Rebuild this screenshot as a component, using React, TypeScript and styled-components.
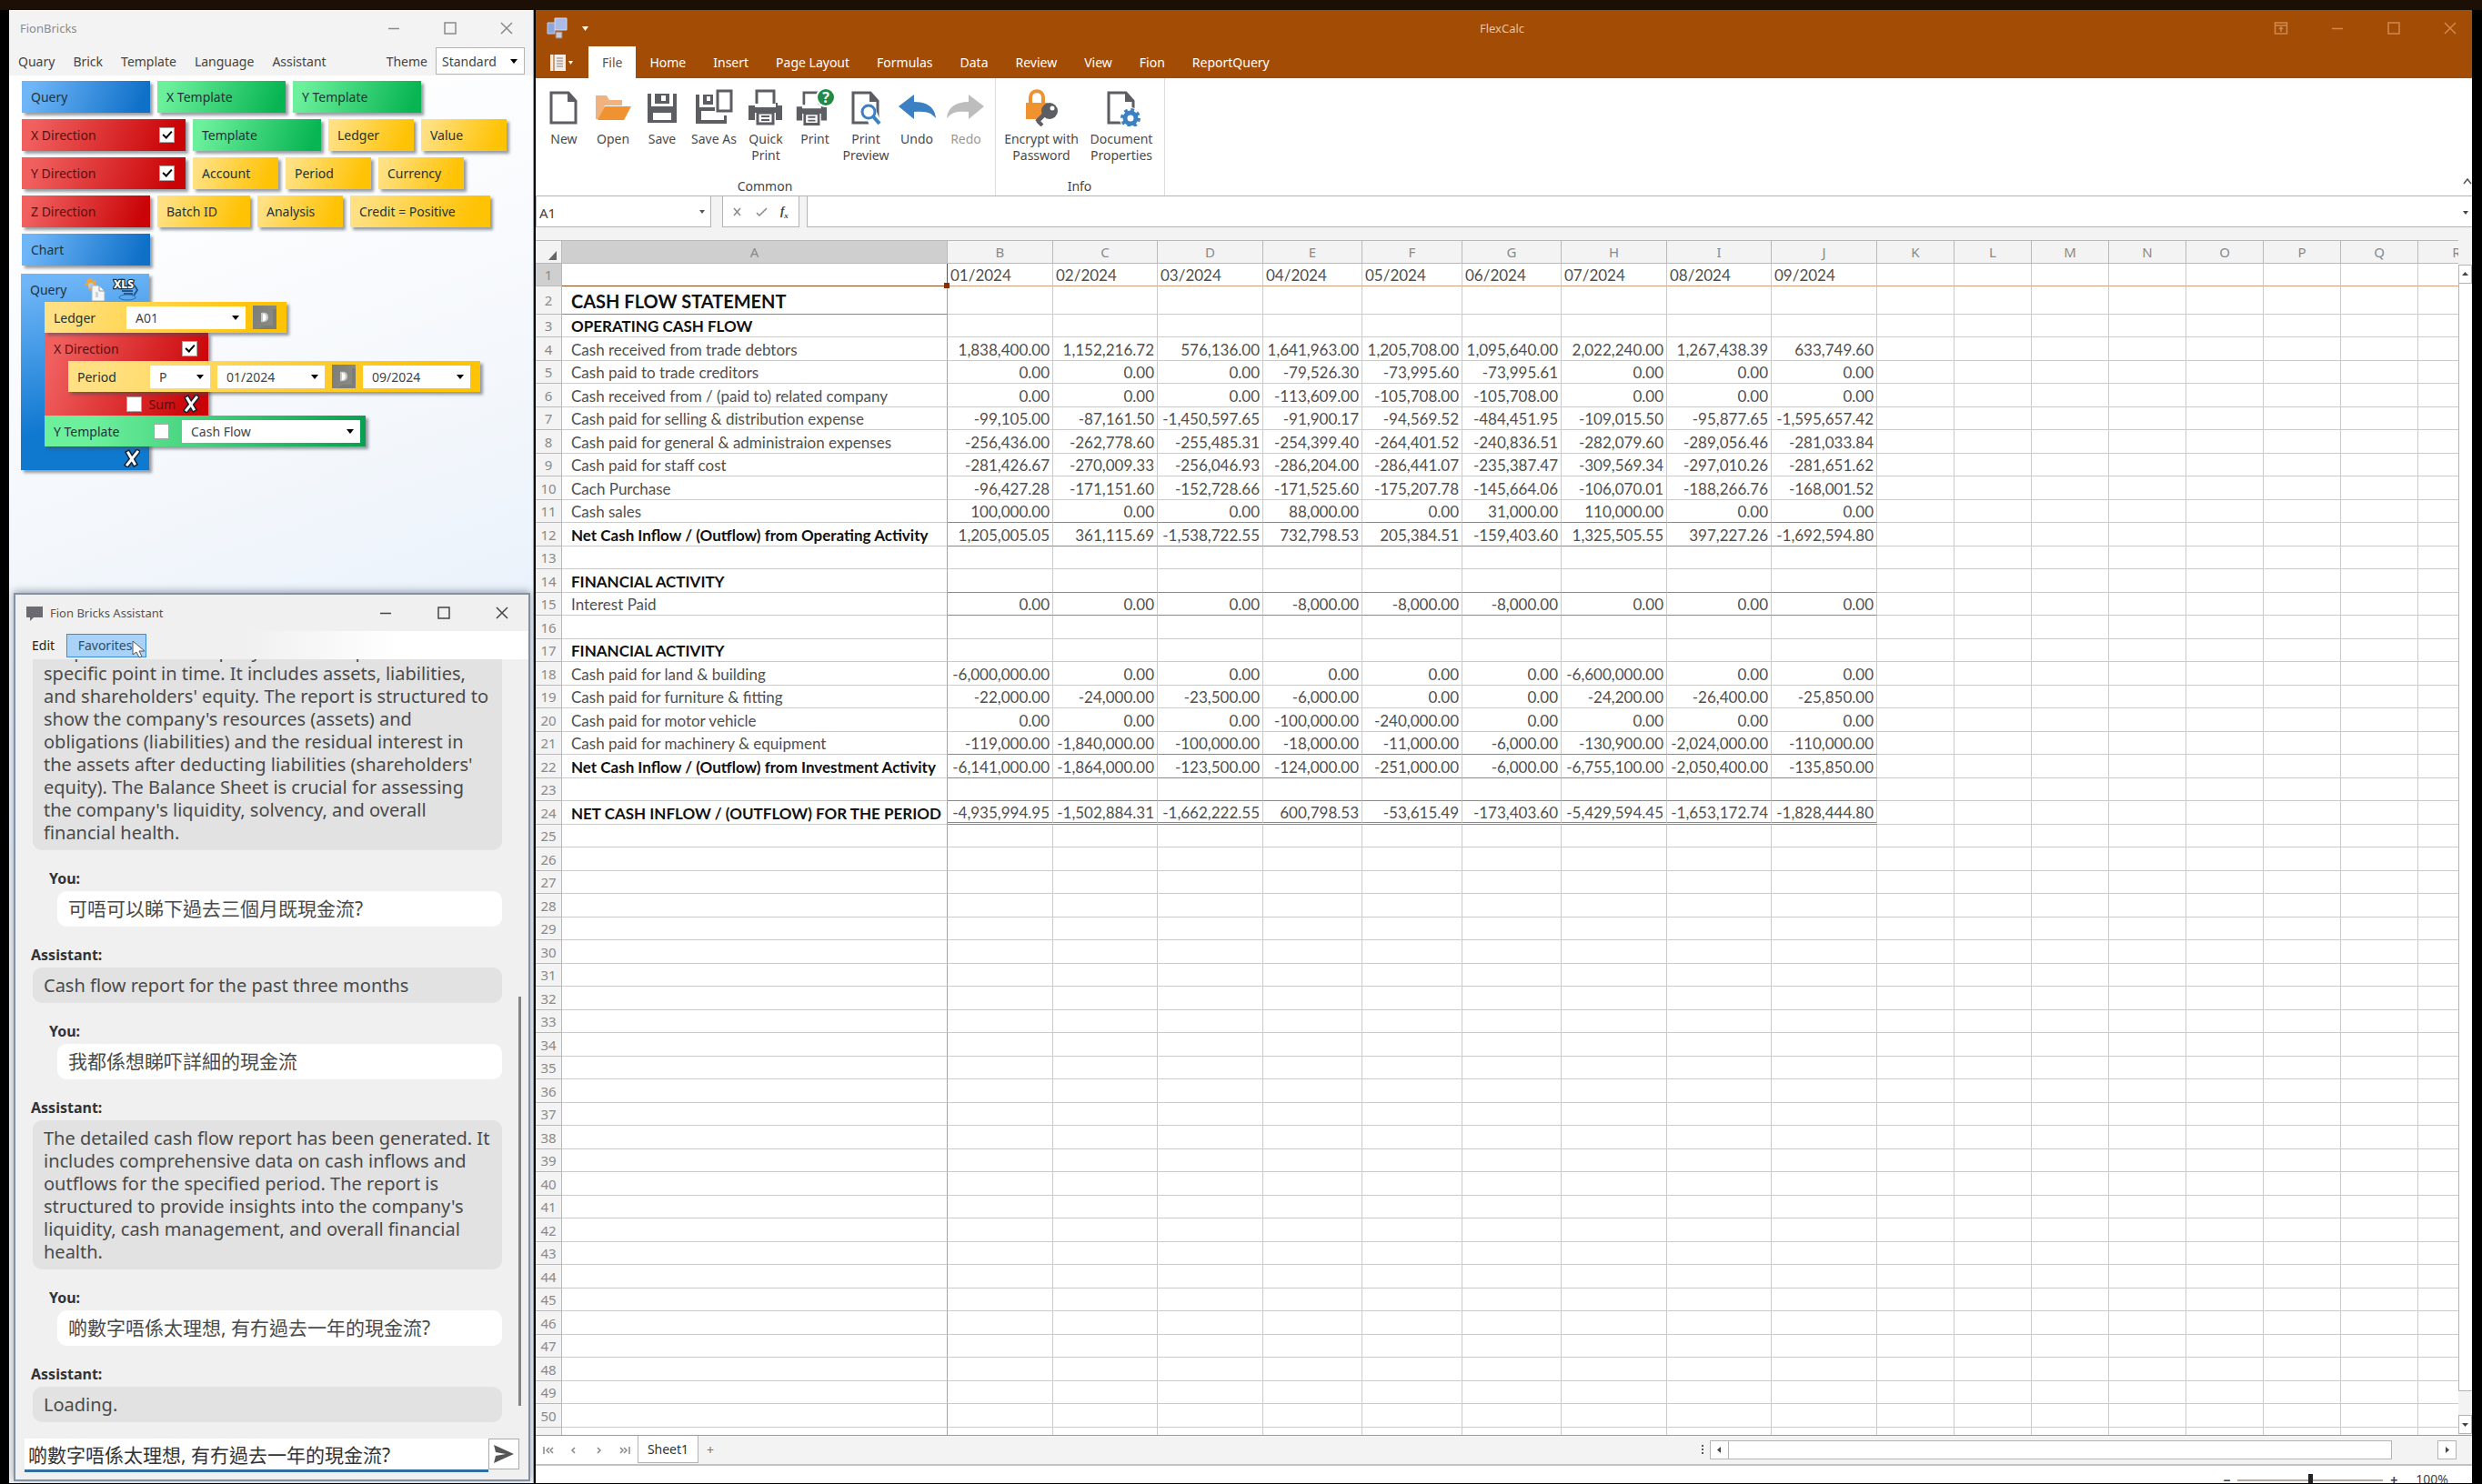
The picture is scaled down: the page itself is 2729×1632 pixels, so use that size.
import React from "react";
import styled, { createGlobalStyle, css } from "styled-components";

const UI = `"Noto Sans", "Noto Sans CJK TC", sans-serif`;
const SHEET = `Lato, "Noto Sans", sans-serif`;

const GlobalStyle = createGlobalStyle`
  *, *::before, *::after { box-sizing: border-box; }
  body { margin: 0; background: #000; font-family: ${UI}; font-size: 14px; color: #444; }
  button, input, select { font: inherit; color: inherit; margin: 0; padding: 0; border: 0; background: none; border-radius: 0; }
`;

/* ---------- Desktop ---------- */

const Desktop = styled.div`
  display: flex;
  height: 100vh;
  padding: 0 11px 1px 10px;
  border-top: 11px solid #1c1006;
  background: #000;
  overflow: hidden;
`;

/* ---------- Shared window parts ---------- */

const TitleBar = styled.header<{ $h: number }>`
  flex: none;
  display: flex;
  align-items: center;
  gap: 8px;
  height: ${(p) => p.$h}px;
  padding: 0 21px 0 12px;
`;

const TitleText = styled.h1<{ $color?: string }>`
  margin: 0;
  flex: 1;
  font-size: 13px;
  font-weight: 400;
  color: ${(p) => p.$color || "#555"};
`;

const WinButtons = styled.div<{ $color: string; $gap: number }>`
  display: flex;
  gap: ${(p) => p.$gap}px;
  color: ${(p) => p.$color};
`;

const WinButton = styled.button`
  width: 16px;
  height: 16px;
  svg { display: block; }
`;

const WinIcon = ({ kind }: { kind: "min" | "max" | "close" | "pin" }) => (
  <svg width="16" height="16" viewBox="0 0 16 16" fill="none" stroke="currentColor" strokeWidth="1.5">
    {kind === "min" && <path d="M2 8.5h12" />}
    {kind === "max" && <rect x="2" y="2" width="12" height="12" />}
    {kind === "close" && <path d="M2 2l12 12M14 2L2 14" />}
    {kind === "pin" && <path d="M1.500 2h13v12h-13zM1.500 5h13M8 12V7M6 9l2-2 2 2" />}
  </svg>
);

/* ---------- Bricks window ---------- */

const BricksWindow = styled.section`
  flex: 0 0 577px;
  display: flex;
  flex-direction: column;
  padding: 0 3px 2px 5px;
  background: linear-gradient(160deg, #fff 10%, #f5f8fc 30%, #e9f1fb 50%, #f2f2f2 60%);
  border-right: 1px solid #9aa2ab;
`;

const BricksChrome = styled.div`
  margin: 0 -3px 0 -5px;
  background: #f3f3f3;
`;

const MenuBar = styled.nav`
  display: flex;
  align-items: center;
  height: 32px;
  padding: 0 9px 0 10px;
`;

const MenuItem = styled.button`
  margin-right: 20px;
`;

const ThemeLabel = styled.label`
  display: flex;
  align-items: center;
  gap: 9px;
  margin-left: auto;
`;

const SelectWrap = styled.span<{ $w: number; $h: number; $border?: boolean }>`
  position: relative;
  display: block;
  flex: none;
  width: ${(p) => p.$w}px;
  height: ${(p) => p.$h}px;
  background: #fff;
  border: ${(p) => (p.$border ? "1px solid #b5b5b5" : "0")};
  &::after {
    content: "";
    position: absolute;
    right: 7px;
    top: 50%;
    margin-top: -2px;
    border: 4px solid transparent;
    border-top: 5px solid #000;
    border-bottom: 0;
    pointer-events: none;
  }
`;

const SelectBox = styled.select<{ $pad: number }>`
  appearance: none;
  width: 100%;
  height: 100%;
  padding: 0 18px 0 ${(p) => p.$pad}px;
  color: #444;
`;

const Dropdown = ({ w, h = 25, pad = 10, border, value, label, id }:
  { w: number; h?: number; pad?: number; border?: boolean; value: string; label: string; id?: string }) => (
  <SelectWrap $w={w} $h={h} $border={border}>
    <SelectBox id={id} $pad={pad} aria-label={label} defaultValue={value}>
      <option>{value}</option>
    </SelectBox>
  </SelectWrap>
);

const Tick = styled.input.attrs({ type: "checkbox" })`
  appearance: none;
  flex: none;
  display: grid;
  place-items: center;
  width: 17px;
  height: 17px;
  background: #fff;
  border: 1px solid rgba(0, 0, 0, 0.35);
  &:checked::before {
    content: "";
    width: 6px;
    height: 10px;
    margin-bottom: 3px;
    border: solid #000;
    border-width: 0 2px 2px 0;
    transform: rotate(42deg);
  }
`;

type Tone = "blue" | "green" | "red" | "yellow";
const tones: Record<Tone, string> = {
  blue: "linear-gradient(110deg, #6fb6f8 8%, #0f70c8 92%)",
  green: "linear-gradient(110deg, #6cf09b 8%, #08b553 92%)",
  red: "linear-gradient(110deg, #f0605f 8%, #c90306 92%)",
  yellow: "linear-gradient(110deg, #ffe184 8%, #ffc306 85%)",
};

const brickLook = css<{ $tone: Tone; $w: number }>`
  width: ${(p) => p.$w}px;
  background: ${(p) => tones[p.$tone]};
  box-shadow: 3px 3px 3px rgba(70, 80, 90, 0.55);
  color: ${(p) => (p.$tone === "red" ? "#5a1010" : "#23333a")};
`;

const Palette = styled.div`
  display: flex;
  flex-direction: column;
  gap: 7px;
  padding: 6px 0 0 9px;
`;

const PaletteRow = styled.div`
  display: flex;
  gap: 8px;
`;

const Brick = styled.div<{ $tone: Tone; $w: number }>`
  ${brickLook}
  display: flex;
  align-items: center;
  justify-content: space-between;
  height: 35px;
  padding: 0 12px 0 10px;
`;

const palette: { t: string; tone: Tone; w: number; tick?: boolean }[][] = [
  [{ t: "Query", tone: "blue", w: 141 }, { t: "X Template", tone: "green", w: 141 }, { t: "Y Template", tone: "green", w: 141 }],
  [{ t: "X Direction", tone: "red", w: 180, tick: true }, { t: "Template", tone: "green", w: 141 }, { t: "Ledger", tone: "yellow", w: 94 }, { t: "Value", tone: "yellow", w: 94 }],
  [{ t: "Y Direction", tone: "red", w: 180, tick: true }, { t: "Account", tone: "yellow", w: 94 }, { t: "Period", tone: "yellow", w: 94 }, { t: "Currency", tone: "yellow", w: 94 }],
  [{ t: "Z Direction", tone: "red", w: 141 }, { t: "Batch ID", tone: "yellow", w: 102 }, { t: "Analysis", tone: "yellow", w: 94 }, { t: "Credit = Positive", tone: "yellow", w: 154 }],
  [{ t: "Chart", tone: "blue", w: 141 }],
];

const Assembly = styled.div<{ $tone: Tone; $w: number }>`
  ${brickLook}
  ${(p) => p.$tone === "blue" && css`background: linear-gradient(170deg, #6fb6f8 5%, #0f78cf 75%);`}
`;

const QueryAssembly = styled(Assembly)`
  margin: 9px 0 0 8px;
  padding-left: 26px;
`;

const AssemblyHead = styled.div<{ $indent?: number }>`
  display: flex;
  align-items: center;
  height: 31px;
  padding: 4px 12px 0 10px;
  margin-left: -${(p) => p.$indent || 0}px;
  justify-content: space-between;
`;

const HeadIcons = styled.div`
  display: flex;
  gap: 8px;
`;

const AssemblyFoot = styled.div`
  display: flex;
  align-items: center;
  justify-content: flex-end;
  gap: 8px;
  height: 26px;
  padding-right: 10px;
`;

const Slot = styled.div<{ $tone: Tone; $w: number; $indent?: number; $gap?: number }>`
  ${brickLook}
  position: relative;
  display: flex;
  align-items: center;
  gap: ${(p) => p.$gap || 8}px;
  height: 34px;
  padding-left: 10px;
  margin-left: ${(p) => p.$indent || 0}px;
  ${(p) => p.$tone === "green" && css`background: linear-gradient(90deg, #6cf09b 15%, #08a050);`}
`;

const SlotLabel = styled.span<{ $w: number }>`
  flex: none;
  width: ${(p) => p.$w}px;
`;

const ToggleButton = styled.button`
  flex: none;
  width: 26px;
  height: 26px;
  background: linear-gradient(115deg, #7d7d78, #8d8d88);
  svg { display: block; margin: auto; }
`;

const Toggle = ({ label }: { label: string }) => (
  <ToggleButton aria-label={label}>
    <svg width="26" height="26" viewBox="0 0 26 26">
      <path d="M22 4h4v22H6l6-4h10z" fill="#6e6e6c" opacity=".5" />
      <path d="M9 8c7-1 8 2 8 5s-2 6-8 5z" fill="#c9c9c9" />
      <path d="M11 9c5 0 5 8 0 8z" fill="#fff" />
    </svg>
  </ToggleButton>
);

const RemoveButton = styled.button`
  flex: none;
  width: 18px;
  height: 20px;
  svg { display: block; }
`;

const Remove = ({ label }: { label: string }) => (
  <RemoveButton aria-label={label}>
    <svg width="18" height="20" viewBox="0 0 18 20" strokeLinecap="square" fill="none">
      <path d="M5 4l7 12M15 3L4 17" stroke="#10202c" strokeWidth="6" />
      <path d="M5 4l7 12M15 3L4 17" stroke="#fff" strokeWidth="3" />
    </svg>
  </RemoveButton>
);

const Spacer = styled.div`
  flex: none;
  height: 135px;
`;

/* ---------- Assistant window ---------- */

const AssistantWindow = styled.section`
  flex: 1;
  min-height: 0;
  display: flex;
  flex-direction: column;
  border: 2px solid #8391a6;
  background: #f0f0f0;
  box-shadow: 0 -2px 8px rgba(60, 70, 90, 0.45);
`;

const AssistantMenu = styled.nav`
  position: relative;
  display: flex;
  align-items: center;
  gap: 13px;
  height: 31px;
  padding-left: 18px;
  color: #222;
  background: linear-gradient(90deg, #f0f0f0 45%, #fff 75%);
`;

const FavButton = styled.button`
  width: 88px;
  height: 26px;
  padding-right: 3px;
  color: #2d4d6c;
  background: #a8d3f7;
  border: 1px solid #3c8bd0;
`;

const Pointer = styled.svg`
  position: absolute;
  left: 128px;
  top: 10px;
`;

const Conversation = styled.div`
  position: relative;
  flex: 1;
  min-height: 0;
  display: flex;
  flex-direction: column;
  justify-content: flex-end;
  overflow: hidden;
  padding: 0 29px 18px 17px;
`;

const Speaker = styled.h2<{ $you?: boolean }>`
  flex: none;
  margin: 0;
  padding: ${(p) => (p.$you ? "20px 0 3px 20px" : "20px 0 3px 0")};
  font-size: 16px;
  line-height: 22px;
  font-weight: 700;
  color: #333;
`;

const Bubble = styled.p<{ $you?: boolean }>`
  flex: none;
  margin: 0 0 0 ${(p) => (p.$you ? 29 : 2)}px;
  padding: 7px 8px 7px 12px;
  border-radius: 10px;
  background: ${(p) => (p.$you ? "#fff" : "#e2e2e2")};
  font-size: ${(p) => (p.$you ? 21 : 20)}px;
  line-height: 25px;
  color: #4a4a4a;
`;

const ScrollThumb = styled.div`
  position: absolute;
  right: 8px;
  bottom: 36px;
  width: 3px;
  height: 450px;
  background: #858585;
`;

const Composer = styled.form`
  flex: none;
  display: flex;
  height: 37px;
  margin: 0 10px 8px;
`;

const ComposerInput = styled.input`
  flex: 1;
  min-width: 0;
  padding-left: 4px;
  background: #fff;
  border-bottom: 3px solid #2f6f9f;
  font-size: 21px;
  color: #333;
`;

const SendButton = styled.button`
  width: 34px;
  height: 34px;
  background: #fff;
  border: 1px solid #aaa;
  svg { display: block; margin: auto; }
`;

const messages: { you?: boolean; continued?: boolean; text: string }[] = [
  { continued: true, text: "snapshot of the company's financial position at a specific point in time. It includes assets, liabilities, and shareholders' equity. The report is structured to show the company's resources (assets) and obligations (liabilities) and the residual interest in the assets after deducting liabilities (shareholders' equity). The Balance Sheet is crucial for assessing the company's liquidity, solvency, and overall financial health." },
  { you: true, text: "可唔可以睇下過去三個月既現金流?" },
  { text: "Cash flow report for the past three months" },
  { you: true, text: "我都係想睇吓詳細的現金流" },
  { text: "The detailed cash flow report has been generated. It includes comprehensive data on cash inflows and outflows for the specified period. The report is structured to provide insights into the company's liquidity, cash management, and overall financial health." },
  { you: true, text: "啲數字唔係太理想, 有冇過去一年的現金流?" },
  { text: "Loading." },
];

/* ---------- FlexCalc window ---------- */

const CalcWindow = styled.section`
  flex: 1;
  min-width: 0;
  display: flex;
  flex-direction: column;
  margin-left: 2px;
  background: #f3f3f3;
`;

const CalcHeader = styled.header`
  flex: none;
  background: #a34c06;
`;

const CalcTitleBar = styled.div`
  display: grid;
  grid-template-columns: 1fr auto 1fr;
  align-items: center;
  height: 40px;
  padding: 0 16px 0 12px;
`;

const QuickAccess = styled.div`
  display: flex;
  align-items: center;
  gap: 16px;
`;

const CalcTitle = styled.h1`
  margin: 0;
  font-size: 13px;
  font-weight: 400;
  color: #e7c4a4;
`;

const CalcButtons = styled(WinButtons)`
  justify-content: flex-end;
`;

const TabRow = styled.nav`
  display: flex;
  align-items: stretch;
  height: 35px;
`;

const PageMenu = styled.button`
  display: flex;
  align-items: center;
  gap: 3px;
  width: 58px;
  padding-left: 16px;
`;

const Tab = styled.button<{ $active?: boolean }>`
  padding: 0 15px;
  color: ${(p) => (p.$active ? "#555" : "#fff")};
  background: ${(p) => (p.$active ? "#fff" : "none")};
`;

const Ribbon = styled.div`
  flex: none;
  display: flex;
  height: 130px;
  background: #fff;
  border-bottom: 1px solid #b4b4b4;
`;

const RibbonGroup = styled.section`
  display: flex;
  flex-direction: column;
  padding: 11px 5px 0 4px;
  border-right: 1px solid #ddd;
`;

const RibbonItems = styled.div`
  flex: 1;
  display: flex;
`;

const RibbonButton = styled.button<{ $w: number; $dim?: boolean }>`
  display: flex;
  flex-direction: column;
  align-items: center;
  gap: 5px;
  width: ${(p) => p.$w}px;
  line-height: 18px;
  color: ${(p) => (p.$dim ? "#999" : "#4a4a4a")};
`;

const GroupName = styled.h2`
  margin: 0;
  font-size: 14px;
  line-height: 20px;
  font-weight: 400;
  text-align: center;
`;

const CollapseButton = styled.button`
  margin: auto 0 8px auto;
`;

const G = "#5d5d64";
const B = "#3a80c3";

const Doc = () => (
  <>
    <path d="M7 5h19l8 9v24H7z" fill="#fff" stroke={G} strokeWidth="3" />
    <path d="M25 5v10h10z" fill={G} />
  </>
);

const Printer = () => (
  <>
    <path d="M11 17V3h19v14" fill="#fff" stroke={G} strokeWidth="3" />
    <path d="M2 19h7v-3h0v5h23v-5h2v3h5v16h-7v-8H9v8H2z" fill={G} />
    <path d="M12 27h17v12H12z" fill="#fff" stroke={G} strokeWidth="3" />
    <path d="M16 31h9M16 35h9" stroke={G} strokeWidth="2" />
  </>
);

const icons: Record<string, React.ReactNode> = {
  new: <Doc />,
  open: (
    <>
      <path d="M2 8h12l3 5h14v6H12L6 34H2z" fill="#f0b380" />
      <path d="M12 20h29l-8 15H4z" fill="#f0922f" />
    </>
  ),
  save: (
    <>
      <path d="M5 6h4v14h24V6h4v32H5z" fill={G} />
      <path d="M13 6h16v11H13z" fill={G} />
      <path d="M20 8h5v6h-5z" fill="#fff" />
      <path d="M11 27h20v8H11z" fill="#fff" />
    </>
  ),
  saveAs: (
    <>
      <path d="M1 7h4v14h17v4H7v10h25v-5h3v9H1z" fill={G} />
      <path d="M9 7h11v11H9z" fill={G} />
      <path d="M13 9h4v5h-4z" fill="#fff" />
      <path d="M12 27h12v7H12z" fill="#fff" />
      <path d="M25 3h15v22H25z" fill="#fff" stroke={G} strokeWidth="3" />
    </>
  ),
  quick: <Printer />,
  print: (
    <>
      <g transform="translate(-1 2) scale(0.9 0.96)"><Printer /></g>
      <circle cx="33" cy="10" r="11" fill="#fff" />
      <circle cx="33" cy="10" r="9" fill="#1f8b45" />
      <text x="33" y="16" textAnchor="middle" fontSize="16" fontWeight="700" fill="#fff">?</text>
    </>
  ),
  preview: (
    <>
      <Doc />
      <path d="M17 21h14l8 20H25z" fill="#fff" />
      <circle cx="24" cy="26" r="7" fill="#fff" stroke={B} strokeWidth="3" />
      <path d="M29 31l7 8" stroke={B} strokeWidth="4" />
    </>
  ),
  undo: <path d="M1 20L18 7v8c14 0 23 6 24 18-6-7-12-8-24-7v8z" fill={B} />,
  redo: <path d="M41 20L24 7v8C10 15 1 21 0 33c6-7 12-8 24-7v8z" fill="#bdbdbd" />,
  encrypt: (
    <>
      <path d="M9 17v-7c0-9 14-9 14 0v7" fill="none" stroke="#f0922f" strokeWidth="4" />
      <path d="M4 16h24v18H4z" fill="#f0922f" />
      <path d="M30 16l12 8-5 12-14 8H12z" fill="#fff" />
      <path d="M16 37l12-12" stroke={G} strokeWidth="5" />
      <path d="M17 36l5 5" stroke={G} strokeWidth="4" />
      <circle cx="30" cy="25" r="9" fill={G} />
      <circle cx="33" cy="22" r="2.500" fill="#fff" />
    </>
  ),
  props: (
    <>
      <Doc />
      <circle cx="31" cy="33" r="12" fill="#fff" />
      <circle cx="31" cy="33" r="6" fill="none" stroke={B} strokeWidth="5" />
      <circle cx="31" cy="33" r="9" fill="none" stroke={B} strokeWidth="4" strokeDasharray="3.600 3.470" />
    </>
  ),
};

const groups = [
  {
    name: "Common",
    items: [
      { id: "new", t: "New", w: 54 }, { id: "open", t: "Open", w: 54 }, { id: "save", t: "Save", w: 54 },
      { id: "saveAs", t: "Save As", w: 60 }, { id: "quick", t: "Quick Print", w: 54 }, { id: "print", t: "Print", w: 54 },
      { id: "preview", t: "Print Preview", w: 58 }, { id: "undo", t: "Undo", w: 54 }, { id: "redo", t: "Redo", w: 54 },
    ],
  },
  { name: "Info", items: [{ id: "encrypt", t: "Encrypt with Password", w: 92 }, { id: "props", t: "Document Properties", w: 84 }] },
];

const FormulaBar = styled.div`
  flex: none;
  display: flex;
  height: 48px;
  padding-bottom: 14px;
`;

const NameBox = styled.label`
  position: relative;
  display: flex;
  width: 193px;
  margin-right: 12px;
  background: #fff;
  border: 1px solid #b4b4b4;
  border-top: 0;
  input { width: 100%; padding: 2px 0 0 3px; font-size: 15px; }
  &::after {
    content: "";
    position: absolute;
    right: 6px;
    top: 15px;
    border: 3px solid transparent;
    border-top: 4px solid #555;
    border-bottom: 0;
  }
`;

const FormulaButtons = styled.div`
  display: flex;
  align-items: center;
  justify-content: space-around;
  width: 85px;
  margin-right: 8px;
  padding: 0 4px;
  background: #fff;
  border: 1px solid #b4b4b4;
  border-top: 0;
  svg { display: block; }
`;

const FxButton = styled.button`
  font: italic 700 13px "Liberation Serif", serif;
  sub { font-size: 9px; }
`;

const FormulaInput = styled.input`
  flex: 1;
  min-width: 0;
  padding: 0 8px;
  background: #fff;
  border: solid #b4b4b4;
  border-width: 0 0 1px 1px;
`;

const ExpandButton = styled.button`
  width: 14px;
  background: #fff;
  border-bottom: 1px solid #b4b4b4;
`;

const GridArea = styled.div`
  flex: 1;
  min-height: 0;
  display: flex;
  border-bottom: 1px solid #9c9c9c;
`;

const GridClip = styled.div`
  flex: 1;
  min-width: 0;
  overflow: hidden;
`;

const GridTable = styled.table`
  width: 100%;
  table-layout: fixed;
  border-collapse: separate;
  border-spacing: 0;
  font-family: ${SHEET};
  font-size: 17px;
  line-height: 22px;
  th, td { padding: 2px 3px 0; border: solid #cbcbcb; border-width: 0 1px 1px 0; white-space: nowrap; overflow: hidden; }
`;

const Row = styled.tr<{ $h: number }>`
  height: ${(p) => p.$h}px;
`;

const ColHead = styled.th<{ $on?: boolean }>`
  && { border-color: #b9b9b9; border-top-width: 1px; padding-top: 0; }
  background: ${(p) => (p.$on ? "#cfcfcf" : "#f3f3f3")};
  font-family: ${UI};
  font-size: 15px;
  font-weight: 400;
  color: #8a8a8a;
`;

const RowHead = styled(ColHead)`
  && { border-top-width: 0; padding: 0; }
`;

const Corner = styled(ColHead)`
  svg { display: block; margin: 8px 2px 0 auto; }
`;

const Cell = styled.td<{ $name?: boolean; $bold?: boolean; $big?: boolean; $num?: boolean; $line?: string; $first?: boolean }>`
  background: #fff;
  color: ${(p) => (p.$bold ? "#111" : "#505050")};
  font-weight: ${(p) => (p.$bold ? 700 : 400)};
  ${(p) => p.$num && css`text-align: right;`}
  ${(p) => p.$name && css`&& { padding-left: 10px; border-right-color: #c99a78; }`}
  ${(p) => p.$big && css`font-size: 20px; && { border-bottom-color: #8a8a8a; }`}
  ${(p) => p.$first && css`&& { border-bottom-color: #cf9f80; }`}
  ${(p) => p.$line === "single" && css`&& { border-bottom-color: #8a8a8a; }`}
  ${(p) => p.$line === "double" && css`&& { border-bottom: 3px double #8a8a8a; line-height: 20px; }`}
`;

const ActiveCell = styled(Cell)`
  && { position: relative; overflow: visible; border-color: #8a4a20; }
  &::after {
    content: "";
    position: absolute;
    right: -3px;
    bottom: -3px;
    width: 6px;
    height: 6px;
    background: #8b2f00;
  }
`;

const VScroll = styled.div`
  flex: none;
  display: flex;
  flex-direction: column;
  width: 15px;
  padding: 27px 0 1px;
  background: #f3f3f3;
`;

const ScrollButton = styled.button<{ $w?: number }>`
  flex: none;
  width: ${(p) => (p.$w ? p.$w + "px" : "auto")};
  height: 21px;
  background: #fff;
  border: 1px solid #b4b4b4;
  svg { display: block; margin: auto; }
`;

const VThumb = styled.div`
  flex: 1;
  margin-bottom: 26px;
  background: #fff;
  border: solid #b4b4b4;
  border-width: 0 0 1px 1px;
`;

const SheetBar = styled.div`
  flex: none;
  display: flex;
  height: 33px;
  border-bottom: 2px solid #c2c2c2;
`;

const SheetNav = styled.div`
  display: flex;
  align-items: center;
  justify-content: space-around;
  width: 112px;
  background: #fff;
  svg { display: block; }
`;

const SheetTab = styled.button`
  width: 67px;
  height: 30px;
  background: #fff;
  border: 1px solid #b4b4b4;
  border-top: 0;
  color: #333;
`;

const AddSheet = styled.button`
  width: 26px;
  color: #777;
`;

const HScroll = styled.div`
  display: flex;
  align-items: center;
  width: 39%;
  margin: 0 17px 0 auto;
  svg { display: block; }
`;

const Grip = styled.span`
  width: 2px;
  height: 12px;
  margin-right: 7px;
  background: repeating-linear-gradient(#555 0 2px, transparent 2px 4px);
`;

const HThumb = styled.div`
  flex: 1;
  height: 21px;
  margin-right: 50px;
  background: #fff;
  border: 1px solid #b4b4b4;
  border-left: 0;
`;

const StatusBar = styled.footer`
  flex: none;
  display: flex;
  align-items: flex-start;
  justify-content: flex-end;
  gap: 6px;
  height: 19px;
  padding: 5px 26px 0 0;
  background: #fff;
  overflow: hidden;
  line-height: 20px;
`;

const ZoomButton = styled.button`
  width: 12px;
  height: 22px;
  font-weight: 700;
  line-height: 20px;
`;

const ZoomSlider = styled.input.attrs({ type: "range" })`
  appearance: none;
  width: 160px;
  height: 22px;
  background: linear-gradient(#b9aaa0, #b9aaa0) center / 100% 2px no-repeat;
  &::-webkit-slider-thumb { appearance: none; width: 5px; height: 14px; background: #222; }
`;

const ZoomValue = styled.output`
  margin-left: 12px;
`;

const Arrow = ({ d }: { d: string }) => (
  <svg width="9" height="9" viewBox="0 0 9 9"><path d={d} fill="#444" /></svg>
);

/* ---------- Sheet data ---------- */

const cols = [29, 424, 116, 115, 116, 109, 110, 109, 116, 115, 116, 85, 85, 85, 85, 85, 85, 85, 85];
const letters = "BCDEFGHIJKLMNOPQR".split("");

type Line = { name?: string; bold?: boolean; vals?: string; line?: "single" | "double" };
const sheet: Record<number, Line> = {
  1: { vals: "01/2024 02/2024 03/2024 04/2024 05/2024 06/2024 07/2024 08/2024 09/2024" },
  2: { name: "CASH FLOW STATEMENT", bold: true },
  3: { name: "OPERATING CASH FLOW", bold: true },
  4: { name: "Cash received from trade debtors", vals: "1,838,400.00 1,152,216.72 576,136.00 1,641,963.00 1,205,708.00 1,095,640.00 2,022,240.00 1,267,438.39 633,749.60" },
  5: { name: "Cash paid to trade creditors", vals: "0.00 0.00 0.00 -79,526.30 -73,995.60 -73,995.61 0.00 0.00 0.00" },
  6: { name: "Cash received from / (paid to) related company", vals: "0.00 0.00 0.00 -113,609.00 -105,708.00 -105,708.00 0.00 0.00 0.00" },
  7: { name: "Cash paid for selling & distribution expense", vals: "-99,105.00 -87,161.50 -1,450,597.65 -91,900.17 -94,569.52 -484,451.95 -109,015.50 -95,877.65 -1,595,657.42" },
  8: { name: "Cash paid for general & administraion expenses", vals: "-256,436.00 -262,778.60 -255,485.31 -254,399.40 -264,401.52 -240,836.51 -282,079.60 -289,056.46 -281,033.84" },
  9: { name: "Cash paid for staff cost", vals: "-281,426.67 -270,009.33 -256,046.93 -286,204.00 -286,441.07 -235,387.47 -309,569.34 -297,010.26 -281,651.62" },
  10: { name: "Cach Purchase", vals: "-96,427.28 -171,151.60 -152,728.66 -171,525.60 -175,207.78 -145,664.06 -106,070.01 -188,266.76 -168,001.52" },
  11: { name: "Cash sales", vals: "100,000.00 0.00 0.00 88,000.00 0.00 31,000.00 110,000.00 0.00 0.00", line: "single" },
  12: { name: "Net Cash Inflow / (Outflow) from Operating Activity", bold: true, vals: "1,205,005.05 361,115.69 -1,538,722.55 732,798.53 205,384.51 -159,403.60 1,325,505.55 397,227.26 -1,692,594.80", line: "single" },
  14: { name: "FINANCIAL ACTIVITY", bold: true, line: "single" },
  15: { name: "Interest Paid", vals: "0.00 0.00 0.00 -8,000.00 -8,000.00 -8,000.00 0.00 0.00 0.00", line: "single" },
  17: { name: "FINANCIAL ACTIVITY", bold: true },
  18: { name: "Cash paid for land & building", vals: "-6,000,000.00 0.00 0.00 0.00 0.00 0.00 -6,600,000.00 0.00 0.00" },
  19: { name: "Cash paid for furniture & fitting", vals: "-22,000.00 -24,000.00 -23,500.00 -6,000.00 0.00 0.00 -24,200.00 -26,400.00 -25,850.00" },
  20: { name: "Cash paid for motor vehicle", vals: "0.00 0.00 0.00 -100,000.00 -240,000.00 0.00 0.00 0.00 0.00" },
  21: { name: "Cash paid for machinery & equipment", vals: "-119,000.00 -1,840,000.00 -100,000.00 -18,000.00 -11,000.00 -6,000.00 -130,900.00 -2,024,000.00 -110,000.00", line: "single" },
  22: { name: "Net Cash Inflow / (Outflow) from Investment Activity", bold: true, vals: "-6,141,000.00 -1,864,000.00 -123,500.00 -124,000.00 -251,000.00 -6,000.00 -6,755,100.00 -2,050,400.00 -135,850.00", line: "single" },
  23: { line: "single" },
  24: { name: "NET CASH INFLOW / (OUTFLOW) FOR THE PERIOD", bold: true, vals: "-4,935,994.95 -1,502,884.31 -1,662,222.55 600,798.53 -53,615.49 -173,403.60 -5,429,594.45 -1,653,172.74 -1,828,444.80", line: "double" },
};

const SheetRow = ({ n }: { n: number }) => {
  const r = sheet[n] || {};
  const vals = r.vals ? r.vals.split(" ") : [];
  return (
    <Row $h={n === 2 ? 31 : n % 2 ? 25 : 26}>
      <RowHead scope="row" $on={n === 1}>{n}</RowHead>
      {n === 1 ? <ActiveCell $name /> : <Cell $name $bold={r.bold} $big={n === 2}>{r.name}</Cell>}
      {letters.map((l, i) => (
        <Cell key={l} $num={n > 1} $first={n === 1} $line={i < 9 ? r.line : undefined}>{vals[i]}</Cell>
      ))}
    </Row>
  );
};

/* ---------- App ---------- */

export default function App() {
  return (
    <Desktop>
      <GlobalStyle />
      <BricksWindow>
        <BricksChrome>
          <TitleBar $h={40}>
            <TitleText $color="#8a8a8a">FionBricks</TitleText>
            <WinButtons $color="#8a8a8a" $gap={46}>
              <WinButton aria-label="Minimize"><WinIcon kind="min" /></WinButton>
              <WinButton aria-label="Maximize"><WinIcon kind="max" /></WinButton>
              <WinButton aria-label="Close"><WinIcon kind="close" /></WinButton>
            </WinButtons>
          </TitleBar>
          <MenuBar>
            {["Quary", "Brick", "Template", "Language", "Assistant"].map((m) => <MenuItem key={m}>{m}</MenuItem>)}
            <ThemeLabel htmlFor="theme">
              Theme
              <Dropdown id="theme" label="Theme" w={98} h={30} pad={6} border value="Standard" />
            </ThemeLabel>
          </MenuBar>
        </BricksChrome>
        <Palette>
          {palette.map((row, i) => (
            <PaletteRow key={i}>
              {row.map((b) => (
                <Brick key={b.t} $tone={b.tone} $w={b.w}>
                  {b.t}
                  {b.tick && <Tick defaultChecked aria-label={b.t} />}
                </Brick>
              ))}
            </PaletteRow>
          ))}
        </Palette>
        <QueryAssembly $tone="blue" $w={141}>
          <AssemblyHead $indent={26}>
            Query
            <HeadIcons>
              <svg width="24" height="26" viewBox="0 0 24 26">
                <path d="M8 0l2 3 4-1-1 4 3 3-4 1-1 4H8l-3-2 0-3-4-2 3-3 0-3z" fill="#f0a43c" />
                <circle cx="8" cy="8" r="3" fill="#a9cdec" />
                <path d="M9 8h8l6 6v11H9z" fill="#f4f6f8" stroke="#9fb0c0" />
                <path d="M17 8v6h6" stroke="#8a9aa8" fill="none" />
                <path d="M13 15h3v6h-3z" fill="#cdd5dc" />
              </svg>
              <svg width="28" height="26" viewBox="0 0 28 26">
                <text x="1" y="11" fontSize="12" fontWeight="800" fill="#fff" stroke="#22303c" strokeWidth="2.500" paintOrder="stroke">XLS</text>
                <path d="M10 14h12M12 17h10M24 8l3 5-4 6" stroke="#24598f" strokeWidth="2" fill="none" />
                <ellipse cx="16" cy="21" rx="9" ry="3" stroke="#2b6fae" fill="none" />
              </svg>
            </HeadIcons>
          </AssemblyHead>
          <Slot $tone="yellow" $w={266}>
            <SlotLabel $w={72}>Ledger</SlotLabel>
            <Dropdown w={131} label="Ledger" value="A01" />
            <Toggle label="Ledger options" />
          </Slot>
          <Assembly $tone="red" $w={180}>
            <AssemblyHead>
              X Direction
              <Tick defaultChecked aria-label="X Direction enabled" />
            </AssemblyHead>
            <Slot $tone="yellow" $w={453} $indent={26}>
              <SlotLabel $w={72}>Period</SlotLabel>
              <Dropdown w={66} label="Period type" value="P" />
              <Dropdown w={118} label="Period from" value="01/2024" />
              <Toggle label="Period options" />
              <Dropdown w={118} label="Period to" value="09/2024" />
            </Slot>
            <AssemblyFoot>
              <Tick id="sum" />
              <label htmlFor="sum">Sum</label>
              <Remove label="Remove X Direction" />
            </AssemblyFoot>
          </Assembly>
          <Slot $tone="green" $w={353} $gap={14}>
            <SlotLabel $w={96}>Y Template</SlotLabel>
            <Tick aria-label="Y Template enabled" />
            <Dropdown w={196} label="Y Template" value="Cash Flow" />
          </Slot>
          <AssemblyFoot><Remove label="Remove Query" /></AssemblyFoot>
        </QueryAssembly>
        <Spacer />

        <AssistantWindow>
          <TitleBar $h={40}>
            <svg width="18" height="18" viewBox="0 0 18 18"><path d="M0 2h18v12H8l-4 4v-4H0z" fill="#6a6a70" /></svg>
            <TitleText>Fion Bricks Assistant</TitleText>
            <WinButtons $color="#444" $gap={48}>
              <WinButton aria-label="Minimize"><WinIcon kind="min" /></WinButton>
              <WinButton aria-label="Maximize"><WinIcon kind="max" /></WinButton>
              <WinButton aria-label="Close"><WinIcon kind="close" /></WinButton>
            </WinButtons>
          </TitleBar>
          <AssistantMenu>
            <button>Edit</button>
            <FavButton>Favorites</FavButton>
            <Pointer width="15" height="20" viewBox="0 0 15 20">
              <path d="M1 1v15l4-3 3 6 3-1-3-6h6z" fill="#fff" stroke="#555" />
            </Pointer>
          </AssistantMenu>
          <Conversation>
            {messages.map((m, i) => (
              <React.Fragment key={i}>
                {!m.continued && <Speaker $you={m.you}>{m.you ? "You:" : "Assistant:"}</Speaker>}
                <Bubble $you={m.you}>{m.text}</Bubble>
              </React.Fragment>
            ))}
            <ScrollThumb />
          </Conversation>
          <Composer onSubmit={(e) => e.preventDefault()}>
            <ComposerInput aria-label="Message" defaultValue="啲數字唔係太理想, 有冇過去一年的現金流?" />
            <SendButton aria-label="Send">
              <svg width="24" height="22" viewBox="0 0 24 22"><path d="M1 1l22 10L1 21l2-8 11-2L3 9z" fill="#555" /></svg>
            </SendButton>
          </Composer>
        </AssistantWindow>
      </BricksWindow>

      <CalcWindow>
        <CalcHeader>
          <CalcTitleBar>
            <QuickAccess>
              <svg width="23" height="24" viewBox="0 0 23 24">
                <path d="M9 1h13v13H9z" fill="#a9bbe6" stroke="#d5dcf0" />
                <path d="M1 6h8v12H1z" fill="#8fa6d8" stroke="#c5cfe8" />
                <path d="M10 16h7v7h-7z" fill="#c9c9d4" stroke="#8d7d80" />
              </svg>
              <svg width="7" height="5" viewBox="0 0 7 5"><path d="M0 0h7L3.500 5z" fill="#fff" /></svg>
            </QuickAccess>
            <CalcTitle>FlexCalc</CalcTitle>
            <CalcButtons $color="#d08a50" $gap={46}>
              <WinButton aria-label="Ribbon options"><WinIcon kind="pin" /></WinButton>
              <WinButton aria-label="Minimize"><WinIcon kind="min" /></WinButton>
              <WinButton aria-label="Maximize"><WinIcon kind="max" /></WinButton>
              <WinButton aria-label="Close"><WinIcon kind="close" /></WinButton>
            </CalcButtons>
          </CalcTitleBar>
          <TabRow>
            <PageMenu aria-label="Page menu">
              <svg width="17" height="18" viewBox="0 0 17 18">
                <path d="M0 0h17v18H0z" fill="#f2ede8" />
                <path d="M4 0v18" stroke="#a34c06" />
                <path d="M7 4h7M7 7h7M7 10h7M7 13h7" stroke="#8a7d74" />
              </svg>
              <svg width="5" height="4" viewBox="0 0 5 4"><path d="M0 0h5L2.500 4z" fill="#fff" /></svg>
            </PageMenu>
            {["File", "Home", "Insert", "Page Layout", "Formulas", "Data", "Review", "View", "Fion", "ReportQuery"].map((t) => (
              <Tab key={t} $active={t === "File"}>{t}</Tab>
            ))}
          </TabRow>
        </CalcHeader>
        <Ribbon>
          {groups.map((g) => (
            <RibbonGroup key={g.name}>
              <RibbonItems>
                {g.items.map((it) => (
                  <RibbonButton key={it.id} $w={it.w} $dim={it.id === "redo"}>
                    <svg width="42" height="42" viewBox="0 0 42 42">{icons[it.id]}</svg>
                    {it.t}
                  </RibbonButton>
                ))}
              </RibbonItems>
              <GroupName>{g.name}</GroupName>
            </RibbonGroup>
          ))}
          <CollapseButton aria-label="Collapse ribbon">
            <svg width="10" height="8" viewBox="0 0 10 8"><path d="M1 7l4-5 4 5" stroke="#555" strokeWidth="1.500" fill="none" /></svg>
          </CollapseButton>
        </Ribbon>
        <FormulaBar>
          <NameBox><input aria-label="Name box" defaultValue="A1" /></NameBox>
          <FormulaButtons>
            <button aria-label="Cancel"><svg width="10" height="10" viewBox="0 0 10 10"><path d="M1 1l7 8M8 1L1 9" stroke="#888" strokeWidth="1.500" /></svg></button>
            <button aria-label="Enter"><svg width="13" height="10" viewBox="0 0 13 10"><path d="M1 6l3 3 8-8" stroke="#888" strokeWidth="1.500" fill="none" /></svg></button>
            <FxButton aria-label="Insert function">f<sub>x</sub></FxButton>
          </FormulaButtons>
          <FormulaInput aria-label="Formula" />
          <ExpandButton aria-label="Expand formula bar"><Arrow d="M1 3h6L4 7z" /></ExpandButton>
        </FormulaBar>
        <GridArea>
          <GridClip>
            <GridTable>
              <colgroup>
                {cols.map((w, i) => <col key={i} style={{ width: w }} />)}
              </colgroup>
              <thead>
                <Row $h={26}>
                  <Corner aria-label="Select all"><svg width="9" height="10" viewBox="0 0 9 10"><path d="M9 0v10H0z" fill="#666" /></svg></Corner>
                  <ColHead scope="col" $on>A</ColHead>
                  {letters.map((l) => <ColHead scope="col" key={l}>{l}</ColHead>)}
                </Row>
              </thead>
              <tbody>
                {Array.from({ length: 51 }, (_, i) => <SheetRow key={i} n={i + 1} />)}
              </tbody>
            </GridTable>
          </GridClip>
          <VScroll>
            <ScrollButton aria-label="Scroll up"><Arrow d="M1 6h7L4.500 2z" /></ScrollButton>
            <VThumb />
            <ScrollButton aria-label="Scroll down"><Arrow d="M1 3h7L4.500 7z" /></ScrollButton>
          </VScroll>
        </GridArea>
        <SheetBar>
          <SheetNav>
            {["M2 1v8M8 2L5 5l3 3M12 2L9 5l3 3", "M8 2L5 5l3 3", "M5 2l3 3-3 3", "M12 1v8M2 2l3 3-3 3M6 2l3 3-3 3"].map((d, i) => (
              <button key={i} aria-label={["First sheet", "Previous sheet", "Next sheet", "Last sheet"][i]}>
                <svg width="14" height="10" viewBox="0 0 14 10"><path d={d} stroke="#888" strokeWidth="1.500" fill="none" /></svg>
              </button>
            ))}
          </SheetNav>
          <SheetTab>Sheet1</SheetTab>
          <AddSheet aria-label="Add sheet">+</AddSheet>
          <HScroll>
            <Grip />
            <ScrollButton $w={21} aria-label="Scroll left"><Arrow d="M6 1v7L2 4.500z" /></ScrollButton>
            <HThumb />
            <ScrollButton $w={21} aria-label="Scroll right"><Arrow d="M3 1v7l4-3.500z" /></ScrollButton>
          </HScroll>
        </SheetBar>
        <StatusBar>
          <ZoomButton aria-label="Zoom out">−</ZoomButton>
          <ZoomSlider aria-label="Zoom" defaultValue={50} />
          <ZoomButton aria-label="Zoom in">+</ZoomButton>
          <ZoomValue>100%</ZoomValue>
        </StatusBar>
      </CalcWindow>
    </Desktop>
  );
}
